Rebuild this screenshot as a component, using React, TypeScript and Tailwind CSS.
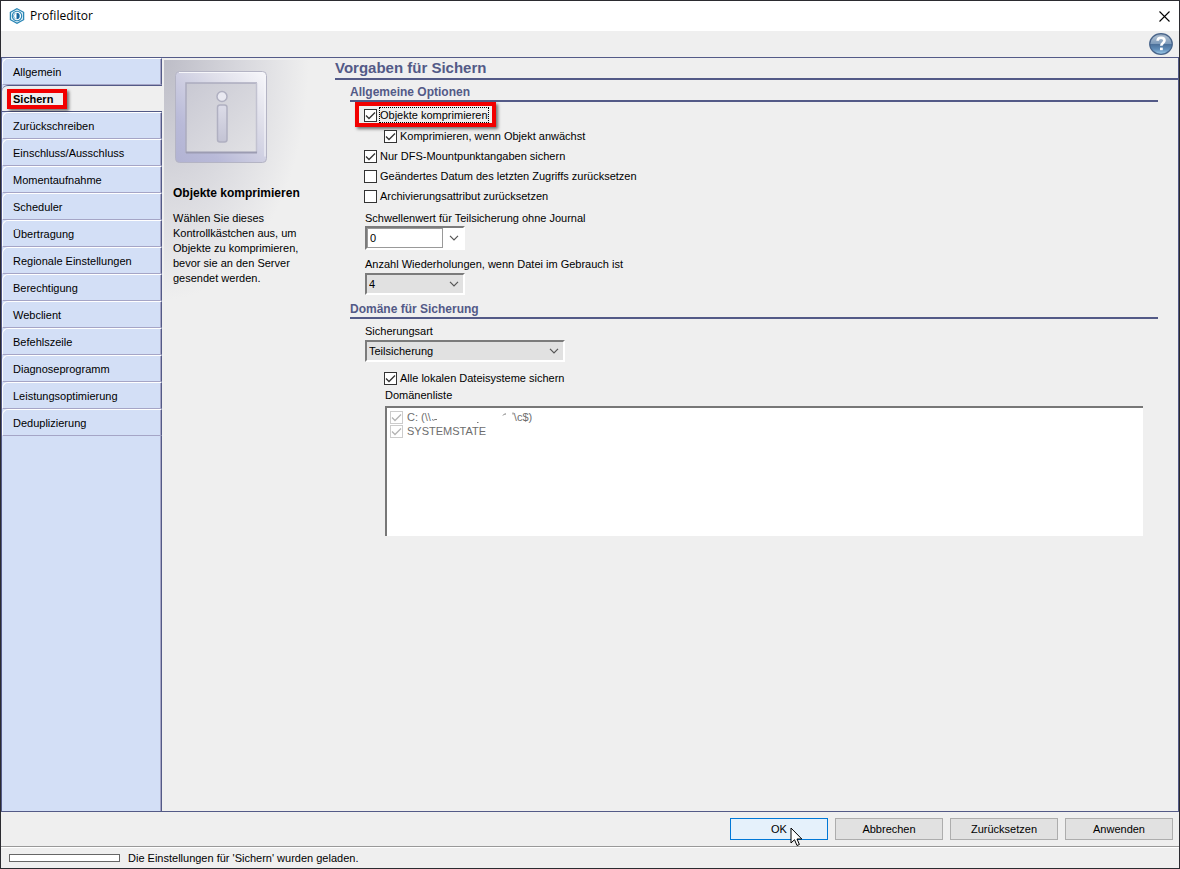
import { useState, type ReactNode } from "react";

const tabs = [
  "Allgemein",
  "Sichern",
  "Zurückschreiben",
  "Einschluss/Ausschluss",
  "Momentaufnahme",
  "Scheduler",
  "Übertragung",
  "Regionale Einstellungen",
  "Berechtigung",
  "Webclient",
  "Befehlszeile",
  "Diagnoseprogramm",
  "Leistungsoptimierung",
  "Deduplizierung",
];

function AppIcon() {
  return (
    <svg width="16" height="16" viewBox="0 0 16 16" fill="none" aria-hidden="true">
      <path d="M8 .7 14.600 4.300v7.400L8 15.300 1.400 11.700V4.300Z" fill="#e3f2f9" stroke="#2a86b5" strokeWidth="1.300" />
      <circle cx="8" cy="8" r="4.700" fill="#fff" stroke="#2a86b5" strokeWidth="1.100" />
      <path d="M7.500 4.800a3.200 3.200 0 0 1 0 6.400Z" fill="#1668a0" />
      <path d="M6.500 5.200a3 3 0 0 0 0 5.600" stroke="#5ea6cc" strokeWidth="1" />
    </svg>
  );
}

function HelpIcon() {
  return (
    <svg width="24" height="22" viewBox="0 0 24 22" aria-hidden="true">
      <defs>
        <linearGradient id="help" x1="0" y1="0" x2="0" y2="1">
          <stop offset="0" stopColor="#8a9db3" />
          <stop offset=".15" stopColor="#a9bbce" />
          <stop offset=".48" stopColor="#7f9cbc" />
          <stop offset=".52" stopColor="#4c719b" />
          <stop offset=".75" stopColor="#5f8cb8" />
          <stop offset="1" stopColor="#a2d0ee" />
        </linearGradient>
      </defs>
      <ellipse cx="12" cy="11" rx="11.300" ry="10.300" fill="url(#help)" stroke="#48648a" strokeWidth="1.200" />
      <path d="M8.600 7.800c.1-2.200 1.600-3.100 3.400-3.100 2 0 3.500 1.100 3.500 2.900 0 2.500-3.200 2.300-3.200 5.200" fill="none" stroke="#fff" strokeWidth="2.600" />
      <rect x="11" y="14.600" width="2.800" height="2.600" fill="#fff" />
    </svg>
  );
}

function InfoArt() {
  return (
    <svg width="92" height="92" viewBox="0 0 92 92" className="ml-0.5" aria-hidden="true">
      <defs>
        <linearGradient id="frame" x1="1" y1="0" x2="0" y2="1">
          <stop offset="0" stopColor="#f8f8fb" />
          <stop offset=".35" stopColor="#dcdce8" />
          <stop offset=".75" stopColor="#b9bad8" />
          <stop offset="1" stopColor="#b2b3d3" />
        </linearGradient>
        <linearGradient id="pane" x1="0" y1="0" x2="1" y2="1">
          <stop offset="0" stopColor="#c9c9d3" />
          <stop offset="1" stopColor="#e2e2e5" />
        </linearGradient>
        <linearGradient id="stem" x1="0" y1="0" x2="0" y2="1">
          <stop offset="0" stopColor="#dcdce8" />
          <stop offset="1" stopColor="#c3c3d4" />
        </linearGradient>
      </defs>
      <rect x=".5" y=".5" width="91" height="91" rx="4" fill="url(#frame)" stroke="#b4b4c4" />
      <path d="M4 1.500h82q4 0 4 4v80" fill="none" stroke="#f6f6fa" />
      <rect x="11" y="12" width="71" height="70" fill="url(#pane)" />
      <path d="M11 82V12H82" fill="none" stroke="#acacbe" strokeWidth="1.500" />
      <path d="M81.500 12v70" fill="none" stroke="#c2c2d0" strokeWidth="1.500" />
      <path d="M11 81.500h71" fill="none" stroke="#9c9cb2" strokeWidth="2" />
      <circle cx="47" cy="25.500" r="5" fill="#e9e9f1" stroke="#b0b0c1" strokeWidth="1.500" />
      <rect x="42.500" y="34" width="9.500" height="37" rx="2.500" fill="url(#stem)" stroke="#b0b0c1" strokeWidth="1.500" />
    </svg>
  );
}

function Check({ children, checked = false, disabled = false, focused = false }: {
  children: ReactNode;
  checked?: boolean;
  disabled?: boolean;
  focused?: boolean;
}) {
  return (
    <label className={disabled ? "flex h-3.5 items-center gap-1 text-[#6d6d6d]" : "flex items-center gap-[3px]"}>
      <span className="grid">
        <input
          type="checkbox"
          defaultChecked={checked}
          disabled={disabled}
          className="peer col-start-1 row-start-1 size-[13px] appearance-none border border-[#333] bg-white disabled:border-[#ccc]"
        />
        <svg
          viewBox="0 0 13 13"
          className="pointer-events-none invisible col-start-1 row-start-1 size-[13px] peer-checked:visible"
          fill="none"
          stroke={disabled ? "#b4b4b4" : "#333"}
          strokeWidth="1.300"
          aria-hidden="true"
        >
          <path d="m2 6.500 3 3 6-6" />
        </svg>
      </span>
      <span className={focused ? "outline-1 outline-dotted outline-black" : "flex items-center"}>{children}</span>
    </label>
  );
}

function Chevron() {
  return (
    <svg width="10" height="6" viewBox="0 0 10 6" fill="none" stroke="#555" strokeWidth="1.200" className="pointer-events-none col-start-1 row-start-1 mr-1 self-center justify-self-end" aria-hidden="true">
      <path d="m1 .8 4 4 4-4" />
    </svg>
  );
}

function Select({ id, options, width }: { id: string; options: string[]; width: string }) {
  return (
    <div className={`mt-0.5 grid ${width} border-2 border-t-[#7b7b7b] border-r-white border-b-white border-l-[#7b7b7b]`}>
      <select id={id} className="col-start-1 row-start-1 h-[18px] appearance-none bg-[#e1e1e1] pl-0.5">
        {options.map((o) => (
          <option key={o}>{o}</option>
        ))}
      </select>
      <Chevron />
    </div>
  );
}

function Heading({ children }: { children: ReactNode }) {
  return <h2 className="border-b-2 border-[#535a87] text-[12px] leading-4 font-bold text-[#535a87]">{children}</h2>;
}

export default function App() {
  const [active, setActive] = useState("Sichern");
  return (
    <div className="flex min-h-screen flex-col border border-[#2b2b30] bg-[#efefef] font-['Liberation_Sans',Arial,sans-serif] text-[11px] leading-[14px] text-black">
      <header className="flex h-[30px] items-center gap-[5px] bg-white pr-[7px] pl-2">
        <AppIcon />
        <h1 className="font-['Open_Sans',sans-serif] text-[12px]">Profileditor</h1>
        <button aria-label="Schließen" className="ml-auto grid size-4 place-items-center">
          <svg width="11" height="11" viewBox="0 0 11 11" stroke="#000" strokeWidth="1.100" aria-hidden="true">
            <path d="m.5.5 10 10m0-10-10 10" />
          </svg>
        </button>
      </header>
      <div className="flex h-[26px] items-center justify-end pr-1.5">
        <button aria-label="Hilfe">
          <HelpIcon />
        </button>
      </div>

      <div className="flex grow border border-[#535a87]">
        <nav className="flex w-40 shrink-0 flex-col bg-[#d3dff6]">
          {tabs.map((t) => (
            <button
              key={t}
              onClick={() => setActive(t)}
              className={
                t === active
                  ? "h-[27px] rounded-tl-md border-t border-b border-[#535a87] bg-[#efefef] pl-[11px] text-left font-bold"
                  : "h-[27px] rounded-tl-md border-t border-r border-b border-l border-t-white border-r-[#535a87] border-b-[#a5a5c6] border-l-white pl-2.5 text-left shadow-[inset_-1px_0_#a5a5c6]"
              }
            >
              {t === active ? (
                <span className="-ml-1.5 inline-block border-4 border-[#f20000] pr-2.5 pl-0.5 leading-3 shadow-[2px_2px_3px_#0008]">
                  {t}
                </span>
              ) : (
                t
              )}
            </button>
          ))}
          <div className="grow border-r border-[#535a87] shadow-[inset_-1px_0_#a5a5c6]" />
        </nav>

        <aside className="mt-0.5 ml-0.5 w-[167px] shrink-0 bg-[radial-gradient(ellipse_145px_240px_at_0_0,#bdbdc7,#d6d6dc_50%,#efefef)] pt-[11px] pr-3 pl-[9px]">
          <InfoArt />
          <h2 className="mt-[23px] text-[12px] font-bold">Objekte komprimieren</h2>
          <p className="mt-[11px] leading-[15px]">
            Wählen Sie dieses Kontrollkästchen aus, um Objekte zu komprimieren, bevor sie an den Server gesendet werden.
          </p>
        </aside>

        <main className="grow pl-1">
          <h1 className="border-b-2 border-[#535a87] pt-px pb-px text-[15px] leading-[18px] font-bold text-[#535a87]">Vorgaben für Sichern</h1>
          <div className="mt-1 mr-5 ml-[15px]">
            <Heading>Allgemeine Optionen</Heading>
            <div className="flex flex-col items-start pl-[15px]">
              <div className="-ml-2.5 border-4 border-[#f20000] pt-0.5 pr-1 pb-px pl-[5px] shadow-[2px_2px_3px_#0008]">
                <Check checked focused>Objekte komprimieren</Check>
              </div>
              <div className="mt-0.5 ml-[19px]">
                <Check checked>Komprimieren, wenn Objekt anwächst</Check>
              </div>
              <div className="mt-1.5 -ml-px flex flex-col gap-1.5">
                <Check checked>Nur DFS-Mountpunktangaben sichern</Check>
                <Check>Geändertes Datum des letzten Zugriffs zurücksetzen</Check>
                <Check>Archivierungsattribut zurücksetzen</Check>
              </div>
              <label htmlFor="threshold" className="mt-2">Schwellenwert für Teilsicherung ohne Journal</label>
              <div className="mt-px grid w-[100px] border-2 border-t-[#7b7b7b] border-r-white border-b-white border-l-[#7b7b7b] bg-white">
                <input id="threshold" defaultValue="0" className="col-start-1 row-start-1 h-5 w-[76px] border border-[#999] bg-white pl-0.5" />
                <Chevron />
              </div>
              <label htmlFor="retries" className="mt-[7px]">Anzahl Wiederholungen, wenn Datei im Gebrauch ist</label>
              <Select id="retries" options={["4"]} width="w-[100px]" />
            </div>
          </div>
          <div className="mt-1.5 mr-5 ml-[15px]">
            <Heading>Domäne für Sicherung</Heading>
            <div className="flex flex-col items-start pt-[5px] pl-[15px]">
              <label htmlFor="type">Sicherungsart</label>
              <Select id="type" options={["Teilsicherung"]} width="w-[200px]" />
              <div className="mt-[9px] flex w-full flex-col items-start gap-1 pr-[15px] pl-5">
                <div className="-ml-px">
                  <Check checked>Alle lokalen Dateisysteme sichern</Check>
                </div>
                <h3 className="leading-[13px]">Domänenliste</h3>
                <div className="h-[130px] w-full border-t-2 border-l-2 border-[#777] bg-white py-0.5 pl-[3px]">
                  <Check checked disabled>
                    {"C: (\\\\"}
                    <svg width="83" height="12" viewBox="0 0 83 12" fill="none" stroke="#777" aria-hidden="true">
                      <path d="M1 8.500q1.500 1.500 3 0h2M46 11.500h1.500M72 4.500l1.500-1.500H75M82 1.500v2" />
                    </svg>
                    {"\\c$)"}
                  </Check>
                  <Check checked disabled>SYSTEMSTATE</Check>
                </div>
              </div>
            </div>
          </div>
        </main>
      </div>

      <footer>
        <div className="flex justify-end gap-[7px] py-1.5 pr-1.5">
          <button className="relative h-[22px] w-[98px] border border-[#0078d7] bg-[#e5f1fb]">
            OK
            <svg width="13" height="20" viewBox="0 0 13 20" className="absolute top-2 left-[59px]" aria-hidden="true">
              <path d="M1 1v15l3.500-3.300 2.500 5.800 2.400-1L7 12h4.800Z" fill="#fff" stroke="#000" />
            </svg>
          </button>
          {["Abbrechen", "Zurücksetzen", "Anwenden"].map((b) => (
            <button key={b} className="h-[22px] w-[108px] border border-[#adadad] bg-[#e1e1e1]">{b}</button>
          ))}
        </div>
        <div className="flex h-[22px] items-center gap-2 border-t border-[#999] pt-px pl-2 shadow-[inset_0_1px_#fff]">
          <span className="h-2 w-[111px] border border-[#666] bg-white" />
          <p>Die Einstellungen für 'Sichern' wurden geladen.</p>
        </div>
      </footer>
    </div>
  );
}
